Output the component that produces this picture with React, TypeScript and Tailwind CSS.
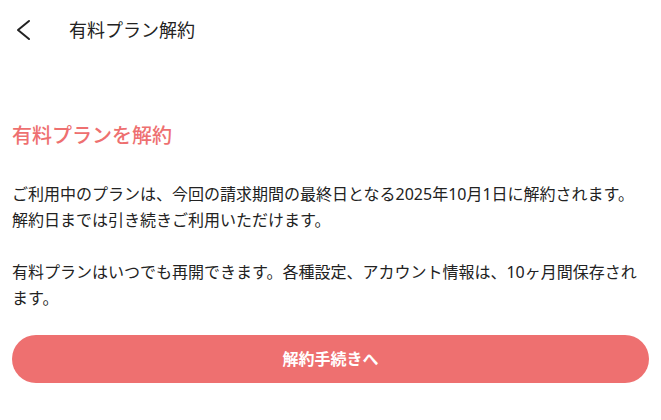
import React from "react";

export default function App() {
  return (
    <div
      className="w-[661px] h-[420px] bg-white text-[#222222] overflow-hidden"
      style={{ fontFamily: '"Noto Sans", "Noto Sans CJK JP", sans-serif' }}
    >
      <header className="h-[60px] flex items-center pl-[15px]">
        <svg width="16" height="22" viewBox="0 0 16 22" fill="none" className="shrink-0">
          <polyline points="14,2 3,11 14,20" stroke="#222222" strokeWidth="2" strokeLinecap="round" strokeLinejoin="round" />
        </svg>
        <h1 className="ml-[38px] text-[18px] leading-[26px] font-normal">有料プラン解約</h1>
      </header>
      <main className="px-[12px] pt-[61px]">
        <h2 className="text-[20px] leading-[30px] font-medium text-[#ee7070]">有料プランを解約</h2>
        <p className="mt-[30px] text-[16px] leading-[26px]">
          ご利用中のプランは、今回の請求期間の最終日となる2025年10月1日に解約されます。解約日までは引き続きご利用いただけます。
        </p>
        <p className="mt-[26px] text-[16px] leading-[26px]">
          有料プランはいつでも再開できます。各種設定、アカウント情報は、10ヶ月間保存されます。
        </p>
        <button className="mt-[24px] w-full h-[48px] rounded-full bg-[#ee7070] text-white text-[16px] font-bold flex items-center justify-center">
          解約手続きへ
        </button>
      </main>
    </div>
  );
}
